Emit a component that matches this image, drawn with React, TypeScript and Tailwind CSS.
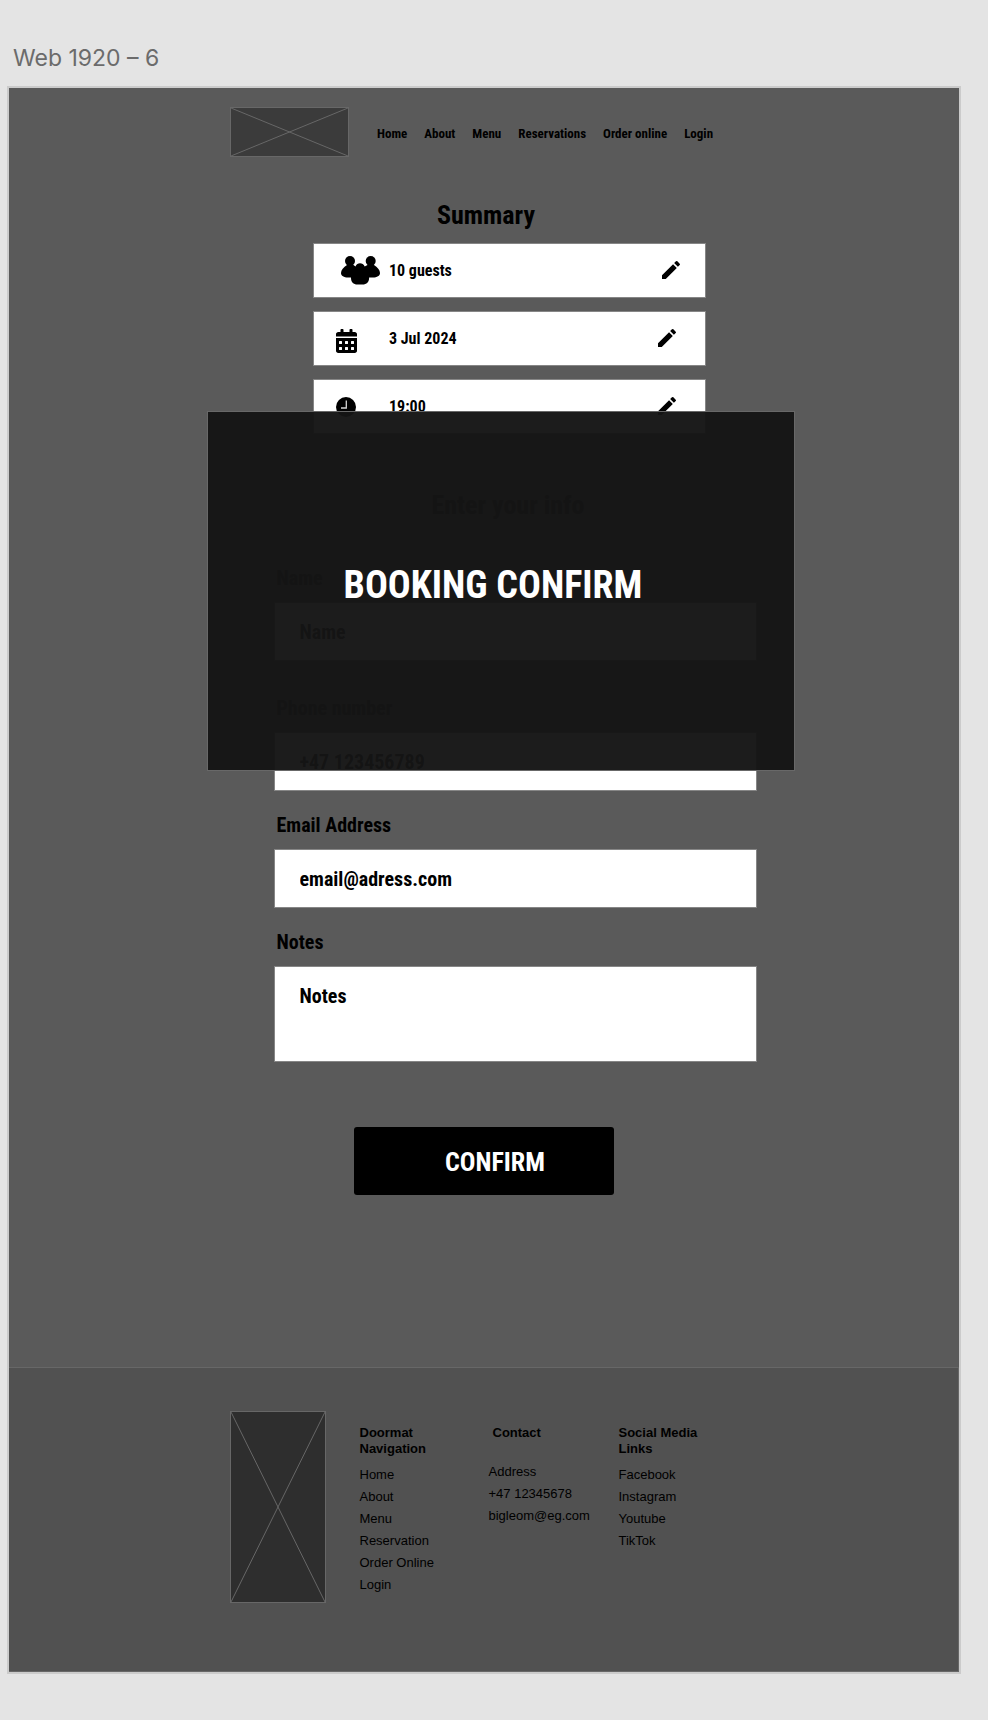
import { FaCalendarAlt } from "react-icons/fa";
import { MdEdit } from "react-icons/md";
import type { ReactNode } from "react";

const condensed = "font-['Roboto_Condensed','Roboto',sans-serif]";

function CrossBox({ className, label }: { className: string; label: string }) {
  return (
    <svg
      role="img"
      aria-label={label}
      viewBox="0 0 100 100"
      preserveAspectRatio="none"
      className={`shrink-0 border border-[#676767] ${className}`}
    >
      <path d="M0 0 100 100M100 0 0 100" stroke="#676767" strokeWidth="1" vectorEffect="non-scaling-stroke" fill="none" />
    </svg>
  );
}

function GuestsIcon() {
  return (
    <svg viewBox="0 0 39 29" width="39" height="29" aria-hidden="true">
      <circle cx="9" cy="5" r="5" />
      <circle cx="29.7" cy="5" r="5" />
      <path d="M6 9h6.5l2 1.4C15.4 8.4 17 7.3 19 7.3s3.8 1.1 4.7 3.1L26.5 9H33c3.4 2.400 6 5 6 8 0 2.800-3 4.500-7 4.500h-3.900c.2 4.500-2.600 7-6.600 7h-5c-4 0-6.700-2.500-6.500-7H7c-4 0-7-1.700-7-4.500 0-3 2.600-5.600 6-8Z" />
    </svg>
  );
}

function ClockIcon() {
  return (
    <svg viewBox="0 0 20 24" width="20" height="24" aria-hidden="true">
      <circle cx="10" cy="10" r="10" />
      <path d="M10.3 3.500v7.500H5" fill="none" stroke="#d4d4d4" strokeWidth="1.3" />
    </svg>
  );
}

function SummaryRow({ icon, text, inset }: { icon: ReactNode; text: string; inset?: boolean }) {
  return (
    <li className="flex h-[55px] items-center border border-[#868686] bg-white pl-[22px]">
      <span className={`flex w-[53px] ${inset ? "pl-[5px]" : "pt-1"}`}>{icon}</span>
      <span className="text-[16px] font-bold leading-6">{text}</span>
      <button type="button" aria-label={`Edit ${text}`} className={`ml-auto pb-0.5 ${inset ? "mr-[22px]" : "mr-[26px]"}`}>
        <MdEdit size={24} />
      </button>
    </li>
  );
}

const labelClass = "mb-3 block pl-[3px] text-[20px] font-bold leading-6";
const fieldClass =
  "block w-full rounded-none border border-[#868686] bg-white px-[25px] text-[20px] font-bold leading-6 text-black outline-none placeholder:text-black placeholder:opacity-100";

function Field({ id, label, type, placeholder, className }: { id: string; label: string; type: string; placeholder: string; className: string }) {
  return (
    <div className={className}>
      <label htmlFor={id} className={labelClass}>
        {label}
      </label>
      <input id={id} type={type} placeholder={placeholder} className={`h-[59px] ${fieldClass}`} />
    </div>
  );
}

function FooterList({ items }: { items: string[] }) {
  return (
    <ul className="mt-[7px]">
      {items.map((item) => (
        <li key={item} className="leading-[22px]">
          <a href="#">{item}</a>
        </li>
      ))}
    </ul>
  );
}

export default function App() {
  return (
    <div className="min-h-screen bg-[#e4e4e4] pt-11 pr-[27px] pb-[46px] pl-[7px]">
      <p className="mb-[14px] pl-1.5 font-['Inter',sans-serif] text-[23px] leading-7 text-[#6b6b6b]">Web 1920 – 6</p>
      <div className={`relative border-2 border-[#cbcbcb] bg-[#5a5a5a] text-black ${condensed}`}>
        <header className="mx-auto flex w-full max-w-[508px] items-center gap-7 pt-[19px] pb-[42px]">
          <CrossBox label="Logo" className="h-[50px] w-[119px] bg-[#3b3b3b]" />
          <nav className="flex gap-[17px] whitespace-nowrap pt-[3px] text-[13px] font-bold leading-5">
            {["Home", "About", "Menu", "Reservations", "Order online", "Login"].map((item) => (
              <a key={item} href="#">
                {item}
              </a>
            ))}
          </nav>
        </header>

        <main className="flex flex-col items-center pb-[172px]">
          <h1 className="pl-1 text-[26px] font-bold leading-8">Summary</h1>
          <ul className="mt-3 ml-[51px] flex w-full max-w-[393px] flex-col gap-[13px]">
            <SummaryRow inset icon={<GuestsIcon />} text="10 guests" />
            <SummaryRow icon={<FaCalendarAlt className="h-6 w-[21px]" />} text="3 Jul 2024" />
            <SummaryRow icon={<ClockIcon />} text="19:00" />
          </ul>

          <h2 className="mt-[55px] pl-12 text-[26px] font-bold leading-8">Enter your info</h2>
          <form className="flex w-full flex-col items-center" onSubmit={(e) => e.preventDefault()}>
            <div className="ml-[62px] w-full max-w-[483px]">
              <Field id="name" label="Name" type="text" placeholder="Name" className="mt-[45px]" />
              <Field id="phone" label="Phone number" type="tel" placeholder="+47 123456789" className="mt-[35px]" />
              <Field id="email" label="Email Address" type="email" placeholder="email@adress.com" className="mt-[22px]" />
              <div className="mt-[22px]">
                <label htmlFor="notes" className={labelClass}>
                  Notes
                </label>
                <textarea id="notes" placeholder="Notes" className={`h-24 resize-none pt-[17px] ${fieldClass}`} />
              </div>
            </div>
            <button
              type="submit"
              className="mt-[65px] h-[68px] w-[260px] rounded-[3px] bg-black pt-0.5 pl-[22px] text-[26px] font-bold leading-8 text-white"
            >
              CONFIRM
            </button>
          </form>
        </main>

        <footer className="border border-l-0 border-[#676767] bg-[#515151] pt-[43px] pb-[68px]">
          <div className="mx-auto flex w-full max-w-[508px] font-['Liberation_Sans',sans-serif] text-[13px] leading-4">
            <CrossBox label="Footer logo" className="h-48 w-24 bg-[#2e2e2e]" />
            <div className="ml-[34px] w-[129px] pt-[14px]">
              <h3 className="w-20 font-bold">Doormat Navigation</h3>
              <FooterList items={["Home", "About", "Menu", "Reservation", "Order Online", "Login"]} />
            </div>
            <div className="w-[130px] pt-[14px]">
              <h3 className="pb-[13px] pl-1 font-bold">Contact</h3>
              <FooterList items={["Address", "+47 12345678", "bigleom@eg.com"]} />
            </div>
            <div className="pt-[14px]">
              <h3 className="w-24 font-bold">Social Media Links</h3>
              <FooterList items={["Facebook", "Instagram", "Youtube", "TikTok"]} />
            </div>
          </div>
        </footer>

        <div className="absolute inset-x-0 top-[323px] flex justify-center pl-[34px]">
          <div
            role="dialog"
            aria-label="Booking confirm"
            className="flex h-[360px] w-full max-w-[588px] items-center justify-center border border-[#686868] bg-[#151515]/97 bg-clip-padding pr-4 pb-3"
          >
            <p className="text-[38px] font-bold leading-12 text-white">BOOKING CONFIRM</p>
          </div>
        </div>
      </div>
    </div>
  );
}
